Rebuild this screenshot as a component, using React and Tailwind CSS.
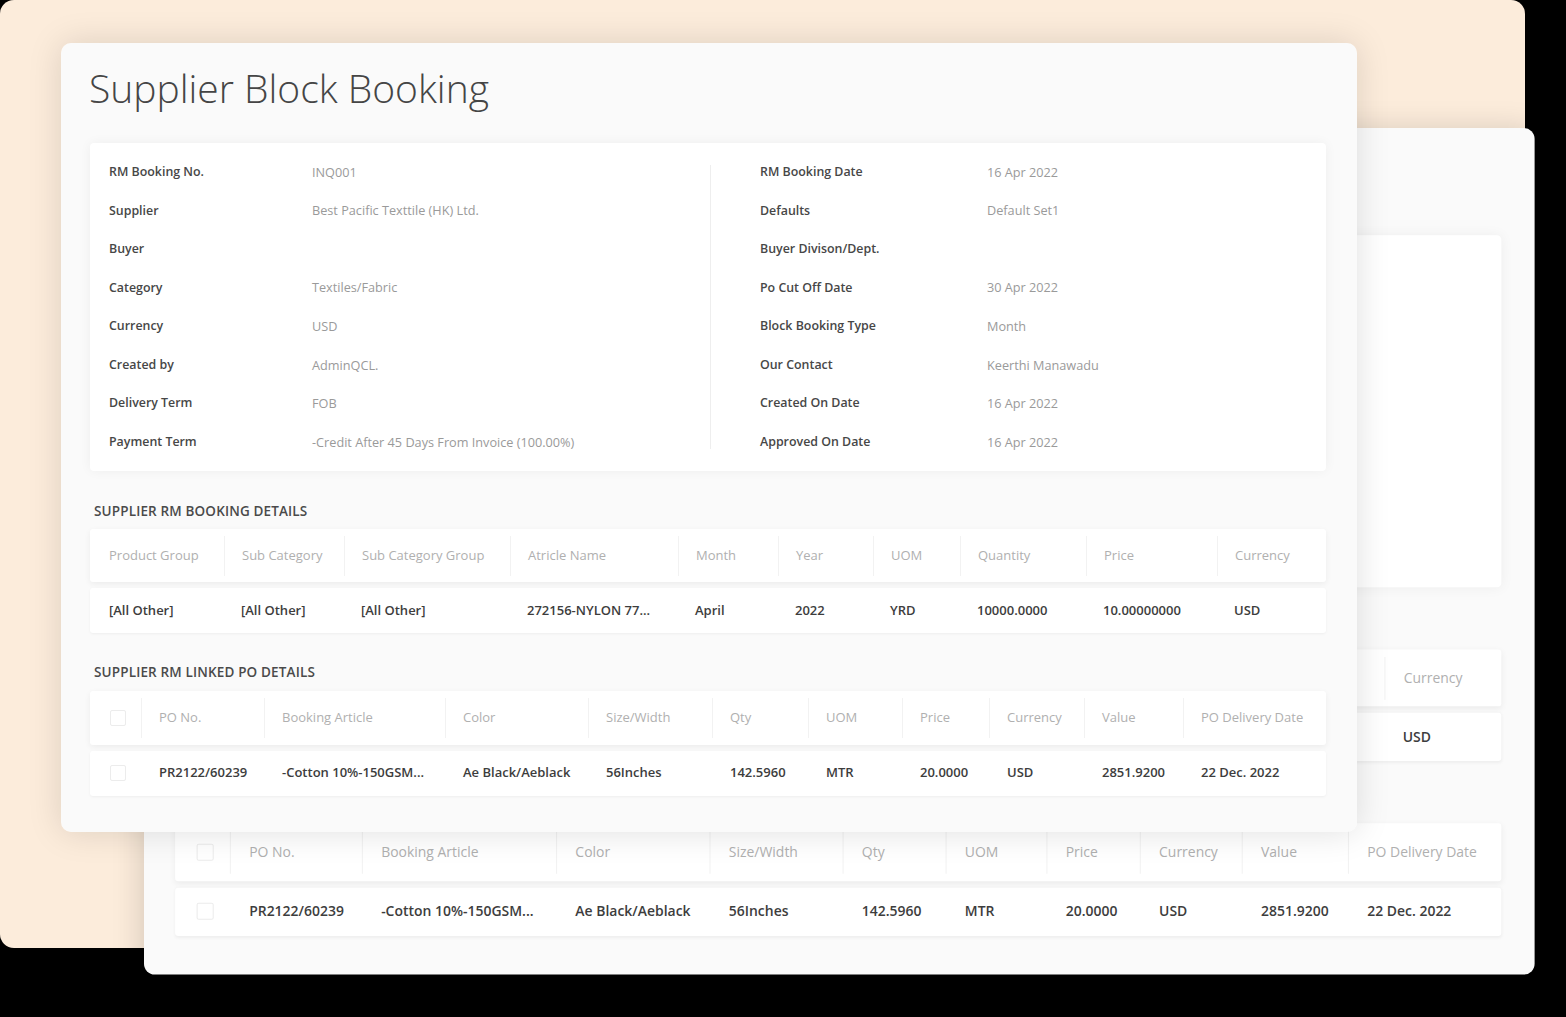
import React from 'react';

const font = { fontFamily: '"Open Sans", "Noto Sans", sans-serif' };

const leftInfo = [
  ['RM Booking No.', 'INQ001'],
  ['Supplier', 'Best Pacific Texttile (HK) Ltd.'],
  ['Buyer', ''],
  ['Category', 'Textiles/Fabric'],
  ['Currency', 'USD'],
  ['Created by', 'AdminQCL.'],
  ['Delivery Term', 'FOB'],
  ['Payment Term', '-Credit After 45 Days From Invoice (100.00%)'],
];

const rightInfo = [
  ['RM Booking Date', '16 Apr 2022'],
  ['Defaults', 'Default Set1'],
  ['Buyer Divison/Dept.', ''],
  ['Po Cut Off Date', '30 Apr 2022'],
  ['Block Booking Type', 'Month'],
  ['Our Contact', 'Keerthi Manawadu'],
  ['Created On Date', '16 Apr 2022'],
  ['Approved On Date', '16 Apr 2022'],
];

// widths measured from the column dividers
const bookingCols = [
  { w: 'w-[134px]', pl: 'pl-[19px]', head: 'Product Group', val: '[All Other]' },
  { w: 'w-[120px]', pl: 'pl-[17px]', head: 'Sub Category', val: '[All Other]' },
  { w: 'w-[166px]', pl: 'pl-[17px]', head: 'Sub Category Group', val: '[All Other]' },
  { w: 'w-[168px]', pl: 'pl-[17px]', head: 'Atricle Name', val: '272156-NYLON 77...' },
  { w: 'w-[100px]', pl: 'pl-[17px]', head: 'Month', val: 'April' },
  { w: 'w-[95px]', pl: 'pl-[17px]', head: 'Year', val: '2022' },
  { w: 'w-[87px]', pl: 'pl-[17px]', head: 'UOM', val: 'YRD' },
  { w: 'w-[126px]', pl: 'pl-[17px]', head: 'Quantity', val: '10000.0000' },
  { w: 'w-[131px]', pl: 'pl-[17px]', head: 'Price', val: '10.00000000' },
  { w: 'flex-1', pl: 'pl-[17px]', head: 'Currency', val: 'USD' },
];

const poCols = [
  { w: 'w-[123px]', head: 'PO No.', val: 'PR2122/60239' },
  { w: 'w-[181px]', head: 'Booking Article', val: '-Cotton 10%-150GSM...' },
  { w: 'w-[143px]', head: 'Color', val: 'Ae Black/Aeblack' },
  { w: 'w-[124px]', head: 'Size/Width', val: '56Inches' },
  { w: 'w-[96px]', head: 'Qty', val: '142.5960' },
  { w: 'w-[94px]', head: 'UOM', val: 'MTR' },
  { w: 'w-[87px]', head: 'Price', val: '20.0000' },
  { w: 'w-[95px]', head: 'Currency', val: 'USD' },
  { w: 'w-[99px]', head: 'Value', val: '2851.9200' },
  { w: 'flex-1', head: 'PO Delivery Date', val: '22 Dec. 2022' },
];

function InfoColumn({ rows, labelWidth, className, hide }) {
  return (
    <div className={className}>
      {rows.map(([label, value]) => (
        <div key={label} className={`flex items-center h-[38.57px] ${hide ? 'invisible' : ''}`}>
          <div className={`${labelWidth} text-[12.4px] font-semibold text-[#474747]`}>{label}</div>
          <div className="text-[12.7px] text-[#9a9a9a]">{value}</div>
        </div>
      ))}
    </div>
  );
}

function Checkbox() {
  return <div className="w-4 h-4 border border-[#ececec] rounded-[2px] bg-white" />;
}

// behind: the copy that sits under the front window; text it would hide is kept out of sight
function BookingCard({ behind = false }) {
  const hide = behind ? 'invisible' : '';
  return (
    <div className="w-[1296px] h-[789px] bg-[#fafafa] rounded-[10px] pl-[29px] pr-[31px] pt-[17px]" style={font}>
      <h1 className={`text-[39px] font-light text-[#454545] leading-[56px] -ml-[1px] ${hide}`}>
        Supplier Block Booking
      </h1>

      <div className="mt-[27px] bg-white rounded-[4px] shadow-[0_0_12px_rgba(0,0,0,0.05)] flex py-[10px] h-[328px]">
        <InfoColumn rows={leftInfo} labelWidth="w-[203px]" className="pl-[19px] w-[620px]" hide={behind} />
        <div className="w-px bg-[#eeeeee] my-[12px]" />
        <InfoColumn rows={rightInfo} labelWidth="w-[227px]" className="pl-[49px]" hide={behind} />
      </div>

      <div className={`mt-[30px] pl-[4px] text-[13.5px] font-semibold text-[#4a4a4a] tracking-[0.15px] ${hide}`}>
        SUPPLIER RM BOOKING DETAILS
      </div>
      <div className="mt-[8px]">
        <div className="flex h-[53px] items-center bg-white rounded-[3px] shadow-[0_2px_6px_rgba(0,0,0,0.06)] text-[13px] text-[#b0b0b0]">
          {bookingCols.map((c, i) => (
            <div
              key={c.head}
              className={`${c.w} ${c.pl} h-[40px] flex items-center ${i > 0 ? 'border-l border-[#f2f2f2]' : ''}`}
            >
              <span className={behind && i < bookingCols.length - 1 ? 'invisible' : ''}>{c.head}</span>
            </div>
          ))}
        </div>
        <div className="mt-[6px] flex h-[45px] items-center bg-white rounded-[3px] shadow-[0_1px_3px_rgba(0,0,0,0.05)] text-[13px] font-semibold text-[#3d3d3d]">
          {bookingCols.map((c, i) => (
            <div key={c.head} className={`${c.w} ${c.pl}`}>
              <span className={behind && i < bookingCols.length - 1 ? 'invisible' : ''}>{c.val}</span>
            </div>
          ))}
        </div>
      </div>

      <div className={`mt-[29px] pl-[4px] text-[13.5px] font-semibold text-[#4a4a4a] tracking-[0.15px] ${hide}`}>
        SUPPLIER RM LINKED PO DETAILS
      </div>
      <div className="mt-[8px]">
        <div className="flex h-[54px] items-center bg-white rounded-[3px] shadow-[0_2px_6px_rgba(0,0,0,0.06)] text-[13px] text-[#b0b0b0]">
          <div className="w-[51px] pl-[20px] flex items-center">
            <Checkbox />
          </div>
          {poCols.map((c) => (
            <div key={c.head} className={`${c.w} pl-[17px] h-[40px] flex items-center border-l border-[#f2f2f2]`}>
              {c.head}
            </div>
          ))}
        </div>
        <div className="mt-[6px] flex h-[45px] items-center bg-white rounded-[3px] shadow-[0_1px_3px_rgba(0,0,0,0.05)] text-[13px] font-semibold text-[#3d3d3d]">
          <div className="w-[51px] pl-[20px] flex items-center">
            <Checkbox />
          </div>
          {poCols.map((c) => (
            <div key={c.head} className={`${c.w} pl-[18px] truncate`}>
              {c.val}
            </div>
          ))}
        </div>
      </div>
    </div>
  );
}

export default function App() {
  return (
    <div className="relative w-[1566px] h-[1017px] bg-black overflow-hidden">
      {/* peach backdrop */}
      <div className="absolute left-0 top-0 w-[1525px] h-[948px] bg-[#fcecdb] rounded-[14px]" />

      {/* back window, same screen a little larger */}
      <div className="absolute left-[144px] top-[128px] origin-top-left scale-[1.073] rounded-[10px] shadow-[0_4px_30px_rgba(0,0,0,0.18)]">
        <BookingCard behind />
      </div>

      {/* front window */}
      <div className="absolute left-[61px] top-[43px] rounded-[10px] shadow-[0_0_34px_rgba(0,0,0,0.13)]">
        <BookingCard />
      </div>
    </div>
  );
}
